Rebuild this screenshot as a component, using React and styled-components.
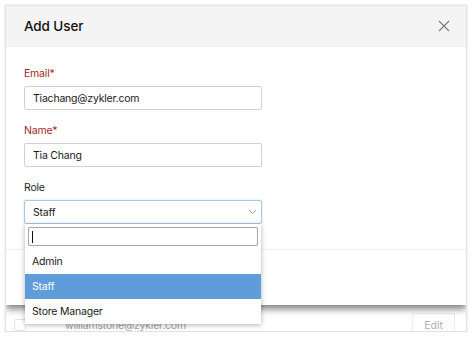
import styled, { createGlobalStyle } from "styled-components";

const GlobalStyle = createGlobalStyle`
  html, body {
    margin: 0;
    background: #fff;
  }
  body {
    font-family: Inter, "Liberation Sans", sans-serif;
    color: #1f1f1f;
  }
`;

const Frame = styled.div`
  position: relative;
  margin: 5px 0 0 5px;
  width: 462px;
  height: 327px;
  box-sizing: border-box;
  border: 1px solid #e2e2e2;
  box-shadow: 0 0 3px rgba(0, 0, 0, 0.12);
  background: #fff;
  overflow: hidden;
  display: flex;
  flex-direction: column;
  justify-content: flex-end;
`;

const BgRow = styled.div`
  height: 32px;
  margin-bottom: -10px;
  display: flex;
  align-items: center;
  padding: 0 11px 0 8px;
`;

const Check = styled.span`
  width: 10px;
  height: 10px;
  border: 1px solid #e4e4e4;
  border-radius: 2px;
  margin-right: 39px;
`;

const BgEmail = styled.span`
  flex: 1;
  font-size: 10.5px;
  letter-spacing: -0.2px;
  color: #a0a0a0;
`;

const BgButton = styled.span`
  width: 43px;
  height: 25px;
  box-sizing: border-box;
  border: 1px solid #ececec;
  display: flex;
  align-items: center;
  justify-content: center;
  font-size: 10.5px;
  color: #b0b0b0;
`;

const Modal = styled.div`
  position: absolute;
  top: 0;
  left: 0;
  right: 0;
  height: 299px;
  background: #fff;
  box-shadow: 0 4px 7px rgba(0, 0, 0, 0.5);
  display: flex;
  flex-direction: column;
`;

const Header = styled.div`
  height: 41px;
  flex-shrink: 0;
  box-sizing: border-box;
  background: #f4f4f4;
  border-bottom: 1px solid #ececec;
  padding: 0 15px 0 18px;
  display: flex;
  align-items: center;
  justify-content: space-between;
`;

const Title = styled.h1`
  margin: 0;
  font-size: 13.5px;
  font-weight: 500;
  letter-spacing: -0.1px;
  color: #111;
`;

const Close = styled.button`
  border: none;
  background: none;
  padding: 0;
  width: 14px;
  height: 14px;
  display: flex;
  cursor: pointer;
`;

const Body = styled.div`
  flex: 1;
  padding: 19px 18px 0;
`;

const Field = styled.div`
  margin-bottom: 13px;
  width: 238px;
`;

const Label = styled.div`
  font-size: 10.5px;
  line-height: 16px;
  margin-bottom: 4px;
  letter-spacing: -0.2px;
  color: ${(p) => (p.required ? "#a0282a" : "#1f1f1f")};
`;

const Input = styled.div`
  height: 24px;
  box-sizing: border-box;
  border: 1px solid #d2d2d2;
  border-radius: 2px;
  padding: 0 8px;
  display: flex;
  align-items: center;
  font-size: 10.5px;
  letter-spacing: -0.2px;
  color: #1a1a1a;
`;

const SelectWrap = styled.div`
  position: relative;
`;

const Select = styled(Input)`
  border-color: #a9c8e9;
  box-shadow: 0 0 2px rgba(110, 165, 225, 0.4);
  justify-content: space-between;
  padding-right: 4px;
`;

const Dropdown = styled.div`
  position: absolute;
  top: 100%;
  left: 1px;
  right: 1px;
  background: #fff;
  box-shadow: 0 1px 5px rgba(0, 0, 0, 0.3);
  padding-top: 3px;
  z-index: 2;
`;

const Search = styled.div`
  margin: 0 3px 3px;
  height: 19px;
  box-sizing: border-box;
  border: 1px solid #a6a6a6;
  border-radius: 2px;
  display: flex;
  align-items: center;
  padding-left: 3px;
`;

const Caret = styled.span`
  width: 1px;
  height: 12px;
  background: #111;
`;

const Option = styled.div`
  height: 25px;
  padding: 0 7px;
  display: flex;
  align-items: center;
  font-size: 10.5px;
  letter-spacing: -0.2px;
  background: ${(p) => (p.active ? "#5e9cda" : "#fff")};
  color: ${(p) => (p.active ? "#fff" : "#1a1a1a")};
`;

const Footer = styled.div`
  height: 55px;
  flex-shrink: 0;
  border-top: 1px solid #efefef;
`;

const roles = ["Admin", "Staff", "Store Manager"];

export default function App() {
  return (
    <>
      <GlobalStyle />
      <Frame>
        <BgRow>
          <Check />
          <BgEmail>williamstone@zykler.com</BgEmail>
          <BgButton>Edit</BgButton>
        </BgRow>
        <Modal>
          <Header>
            <Title>Add User</Title>
            <Close aria-label="Close">
              <svg width="14" height="14" viewBox="0 0 14 14">
                <path d="M2 2L12 12M12 2L2 12" stroke="#7a7a7a" strokeWidth="1.1" fill="none" />
              </svg>
            </Close>
          </Header>
          <Body>
            <Field>
              <Label required>Email*</Label>
              <Input>Tiachang@zykler.com</Input>
            </Field>
            <Field>
              <Label required>Name*</Label>
              <Input>Tia Chang</Input>
            </Field>
            <Field>
              <Label>Role</Label>
              <SelectWrap>
                <Select>
                  Staff
                  <svg width="9" height="6" viewBox="0 0 9 6">
                    <path d="M1 1L4.5 4.5L8 1" stroke="#9a9a9a" strokeWidth="1" fill="none" />
                  </svg>
                </Select>
                <Dropdown>
                  <Search>
                    <Caret />
                  </Search>
                  {roles.map((r) => (
                    <Option key={r} active={r === "Staff"}>
                      {r}
                    </Option>
                  ))}
                </Dropdown>
              </SelectWrap>
            </Field>
          </Body>
          <Footer />
        </Modal>
      </Frame>
    </>
  );
}
